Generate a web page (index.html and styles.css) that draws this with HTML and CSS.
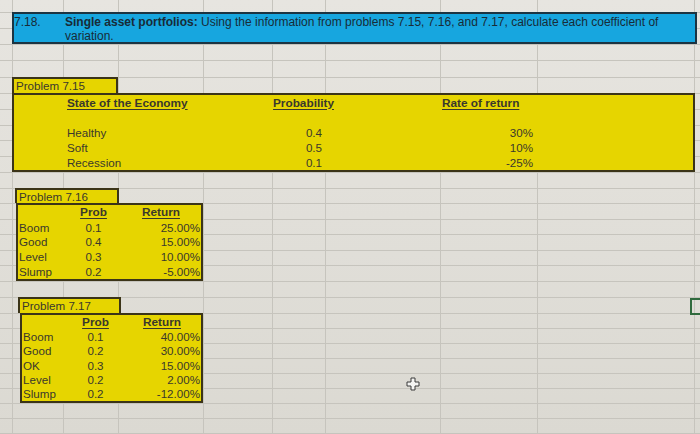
FILE: index.html
```html
<!DOCTYPE html>
<html lang="en">
<head>
<meta charset="utf-8">
<title>7.18 Single asset portfolios</title>
<link rel="stylesheet" href="styles.css">
</head>
<body>
<div class="sheet">
  <div class="title">
    <span class="qnum">7.18.</span>
    <p class="qtext"><b>Single asset portfolios:</b> Using the information from problems 7.15, 7.16, and 7.17, calculate each coefficient of<br>variation.</p>
  </div>

  <div class="label l15">Problem 7.15</div>
  <div class="box b15">
    <div class="cb hdr">State of the Economy</div>
    <div class="ce hdr">Probability</div>
    <div class="cg hdr">Rate of return</div>
    <div class="blank"></div>
    <div class="cb">Healthy</div><div class="ce n">0.4</div><div class="cg n">30%</div>
    <div class="cb">Soft</div><div class="ce n">0.5</div><div class="cg n">10%</div>
    <div class="cb">Recession</div><div class="ce n">0.1</div><div class="cg n">-25%</div>
  </div>

  <div class="label l16">Problem 7.16</div>
  <div class="box small b16">
    <div></div><div class="mid hdr">Prob</div><div class="mid hdr">Return</div>
    <div>Boom</div><div class="mid">0.1</div><div class="n">25.00%</div>
    <div>Good</div><div class="mid">0.4</div><div class="n">15.00%</div>
    <div>Level</div><div class="mid">0.3</div><div class="n">10.00%</div>
    <div>Slump</div><div class="mid">0.2</div><div class="n">-5.00%</div>
  </div>

  <div class="label l17">Problem 7.17</div>
  <div class="box small b17">
    <div></div><div class="mid hdr">Prob</div><div class="mid hdr">Return</div>
    <div>Boom</div><div class="mid">0.1</div><div class="n">40.00%</div>
    <div>Good</div><div class="mid">0.2</div><div class="n">30.00%</div>
    <div>OK</div><div class="mid">0.3</div><div class="n">15.00%</div>
    <div>Level</div><div class="mid">0.2</div><div class="n">2.00%</div>
    <div>Slump</div><div class="mid">0.2</div><div class="n">-12.00%</div>
  </div>

  <div class="selected"></div>

  <svg class="cursor" width="14" height="14" viewBox="0 0 14 14" aria-hidden="true">
    <path d="M5 1H9V5H13V9H9V13H5V9H1V5H5Z" fill="#f4f4f2" stroke="#3a3a3a" stroke-width="1"/>
  </svg>
</div>
</body>
</html>
```

FILE: styles.css
```css
* {
  box-sizing: border-box;
  margin: 0;
  padding: 0;
}

html,
body {
  width: 700px;
  height: 434px;
  overflow: hidden;
}

body {
  font-family: "Liberation Sans", Arial, Helvetica, sans-serif;
  font-size: 11.6px;
  color: #3a382c;
  background: #e2e0da;
}

.sheet {
  --grid: #c6c4bd;
  position: relative;
  width: 700px;
  height: 434px;
  overflow: hidden;
  display: grid;
  grid-template-columns: 12px 51px 55px 85px 69px 53px 115px 97px 158px 5px;
  grid-template-rows:
    12px 16px 16px 16px 17px 16px 16px 16px 15px 16px
    16px 16px 15px 16px 15px 16px 15px 16px 16px 16px
    15px 15px 15px 15px 15px 15px 15px 15px 1px;
  background-image:
    linear-gradient(to right,
      transparent 12px, var(--grid) 12px 13px,
      transparent 13px 63px, var(--grid) 63px 64px,
      transparent 64px 118px, var(--grid) 118px 119px,
      transparent 119px 203px, var(--grid) 203px 204px,
      transparent 204px 272px, var(--grid) 272px 273px,
      transparent 273px 325px, var(--grid) 325px 326px,
      transparent 326px 440px, var(--grid) 440px 441px,
      transparent 441px 537px, var(--grid) 537px 538px,
      transparent 538px 694px, var(--grid) 694px 695px,
      transparent 695px),
    linear-gradient(to bottom,
      transparent 12px, var(--grid) 12px 13px,
      transparent 13px 28px, var(--grid) 28px 29px,
      transparent 29px 44px, var(--grid) 44px 45px,
      transparent 45px 60px, var(--grid) 60px 61px,
      transparent 61px 77px, var(--grid) 77px 78px,
      transparent 78px 93px, var(--grid) 93px 94px,
      transparent 94px 109px, var(--grid) 109px 110px,
      transparent 110px 125px, var(--grid) 125px 126px,
      transparent 126px 140px, var(--grid) 140px 141px,
      transparent 141px 156px, var(--grid) 156px 157px,
      transparent 157px 172px, var(--grid) 172px 173px,
      transparent 173px 188px, var(--grid) 188px 189px,
      transparent 189px 203px, var(--grid) 203px 204px,
      transparent 204px 219px, var(--grid) 219px 220px,
      transparent 220px 234px, var(--grid) 234px 235px,
      transparent 235px 250px, var(--grid) 250px 251px,
      transparent 251px 265px, var(--grid) 265px 266px,
      transparent 266px 281px, var(--grid) 281px 282px,
      transparent 282px 297px, var(--grid) 297px 298px,
      transparent 298px 313px, var(--grid) 313px 314px,
      transparent 314px 328px, var(--grid) 328px 329px,
      transparent 329px 343px, var(--grid) 343px 344px,
      transparent 344px 358px, var(--grid) 358px 359px,
      transparent 359px 373px, var(--grid) 373px 374px,
      transparent 374px 388px, var(--grid) 388px 389px,
      transparent 389px 403px, var(--grid) 403px 404px,
      transparent 404px 418px, var(--grid) 418px 419px,
      transparent 419px 433px, var(--grid) 433px 434px),
    linear-gradient(to bottom, #e7e5e0, #dbd9d2);
}

/* Question banner */
.title {
  grid-row: 2 / 4;
  grid-column: 2 / 10;
  margin-right: -2px;
  display: grid;
  grid-template-columns: 49px 1fr;
  background: #17a6df;
  border: 2px solid #1c3442;
  color: #182b37;
  font-size: 12px;
  line-height: 14px;
}

.qnum {
  padding-top: 1px;
}

.qtext {
  padding: 1px 0 0 2px;
}

/* Yellow problem blocks */
.label {
  background: #e6d500;
  border: 2px solid #3b3418;
  border-bottom: 0;
  padding: 0 2px;
  line-height: 14px;
  white-space: nowrap;
}

.box {
  background: #e6d500;
  border: 2px solid #3b3418;
  display: grid;
  white-space: nowrap;
}

.box > div {
  display: flex;
  align-items: center;
}

.hdr {
  font-weight: bold;
  font-size: 11.8px;
  text-decoration: underline;
  text-underline-offset: 2px;
}

.n {
  justify-content: flex-end;
}

.mid {
  justify-content: center;
}

.l15 {
  grid-row: 6;
  grid-column: 2 / 4;
}

.b15 {
  grid-row: 7 / 12;
  grid-column: 2 / 10;
  grid-template-columns: 50px 55px 85px 69px 53px 115px 97px 1fr;
  grid-template-rows: repeat(5, 1fr);
}

.b15 .blank {
  grid-column: 1 / -1;
}

.cb {
  grid-column: 2;
  padding-left: 3px;
}

.ce {
  grid-column: 5;
  padding: 0 4px 0 0;
}

.cg {
  grid-column: 7;
  padding: 0 5px 0 1px;
}

.small {
  grid-template-columns: 48px 55px 1fr;
}

.small > div:nth-child(3n + 1) {
  padding-left: 1px;
}

.small .n {
  padding-right: 1px;
}

.l16 {
  grid-row: 13;
  grid-column: 2 / 4;
  margin-left: 3px;
  margin-right: -1px;
}

.b16 {
  grid-row: 14 / 19;
  grid-column: 2 / 5;
  margin-left: 4px;
  grid-template-rows: repeat(5, 1fr);
}

.l17 {
  grid-row: 20;
  grid-column: 2 / 4;
  margin-left: 6px;
  margin-right: -3px;
}

.b17 {
  grid-row: 21 / 27;
  grid-column: 2 / 5;
  margin-left: 8px;
  grid-template-columns: 46px 55px 1fr;
  grid-template-rows: repeat(6, 1fr);
}

/* Active cell outline at the right edge */
.selected {
  grid-row: 20;
  grid-column: 10;
  justify-self: start;
  align-self: start;
  width: 40px;
  height: 17px;
  margin: 1px 0 0 -5px;
  border: 2px solid #2f6a3d;
}

/* Mouse pointer over the sheet */
.cursor {
  position: absolute;
  left: 406px;
  top: 377px;
}
```
